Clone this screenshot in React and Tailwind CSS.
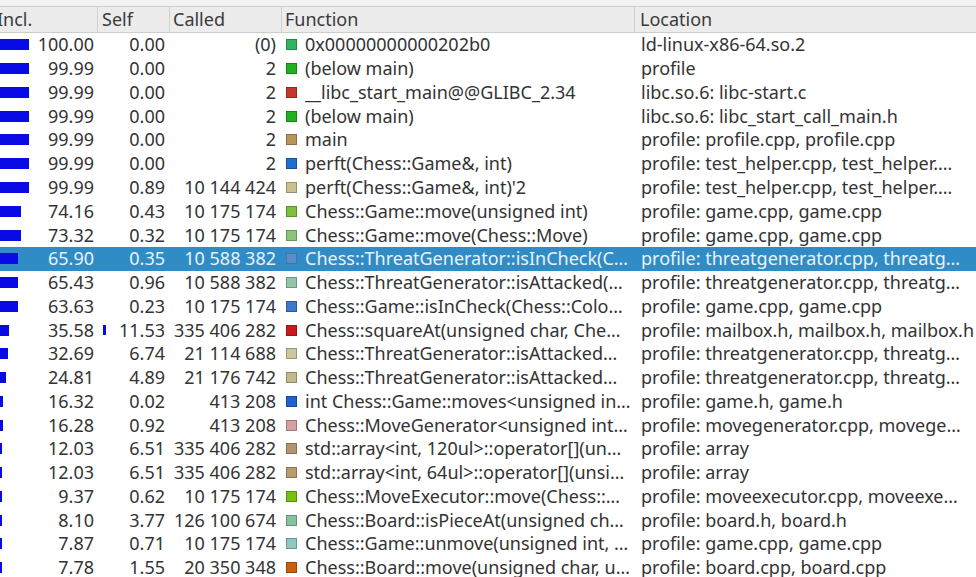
import React from "react";

/* ===== Data ===== */
const rows = [
  ["100.00", "0.00", "(0)", "#33b260", "0x00000000000202b0", "ld-linux-x86-64.so.2"],
  ["99.99", "0.00", "2", "#22b022", "(below main)", "profile"],
  ["99.99", "0.00", "2", "#c0392b", "__libc_start_main@@GLIBC_2.34", "libc.so.6: libc-start.c"],
  ["99.99", "0.00", "2", "#22b022", "(below main)", "libc.so.6: libc_start_call_main.h"],
  ["99.99", "0.00", "2", "#b8955a", "main", "profile: profile.cpp, profile.cpp"],
  ["99.99", "0.00", "2", "#1f6fd0", "perft(Chess::Game&, int)", "profile: test_helper.cpp, test_helper.…"],
  ["99.99", "0.89", "10 144 424", "#c9c28f", "perft(Chess::Game&, int)'2", "profile: test_helper.cpp, test_helper.…"],
  ["74.16", "0.43", "10 175 174", "#7cc03c", "Chess::Game::move(unsigned int)", "profile: game.cpp, game.cpp"],
  ["73.32", "0.32", "10 175 174", "#8cc47a", "Chess::Game::move(Chess::Move)", "profile: game.cpp, game.cpp"],
  ["65.90", "0.35", "10 588 382", "#6f8ccc", "Chess::ThreatGenerator::isInCheck(C…", "profile: threatgenerator.cpp, threatg…", true],
  ["65.43", "0.96", "10 588 382", "#92c6a8", "Chess::ThreatGenerator::isAttacked(…", "profile: threatgenerator.cpp, threatg…"],
  ["63.63", "0.23", "10 175 174", "#3a7ac8", "Chess::Game::isInCheck(Chess::Colo…", "profile: game.cpp, game.cpp"],
  ["35.58", "11.53", "335 406 282", "#c81c1c", "Chess::squareAt(unsigned char, Che…", "profile: mailbox.h, mailbox.h, mailbox.h"],
  ["32.69", "6.74", "21 114 688", "#cbc8a0", "Chess::ThreatGenerator::isAttacked…", "profile: threatgenerator.cpp, threatg…"],
  ["24.81", "4.89", "21 176 742", "#c2b98e", "Chess::ThreatGenerator::isAttacked…", "profile: threatgenerator.cpp, threatg…"],
  ["16.32", "0.02", "413 208", "#2060d0", "int Chess::Game::moves<unsigned in…", "profile: game.h, game.h"],
  ["16.28", "0.92", "413 208", "#d2a2a2", "Chess::MoveGenerator<unsigned int…", "profile: movegenerator.cpp, movege…"],
  ["12.03", "6.51", "335 406 282", "#b39572", "std::array<int, 120ul>::operator[](un…", "profile: array"],
  ["12.03", "6.51", "335 406 282", "#b89c6c", "std::array<int, 64ul>::operator[](unsi…", "profile: array"],
  ["9.37", "0.62", "10 175 174", "#78c010", "Chess::MoveExecutor::move(Chess::…", "profile: moveexecutor.cpp, moveexe…"],
  ["8.10", "3.77", "126 100 674", "#88c0a0", "Chess::Board::isPieceAt(unsigned ch…", "profile: board.h, board.h"],
  ["7.87", "0.71", "10 175 174", "#90c8c0", "Chess::Game::unmove(unsigned int, …", "profile: game.cpp, game.cpp"],
  ["7.78", "1.55", "20 350 348", "#c86010", "Chess::Board::move(unsigned char, u…", "profile: board.cpp, board.cpp"],
];

/* ===== Row ===== */
function Row({ incl, self, called, color, fn, loc, selected }) {
  const inclW = Math.max((31 * parseFloat(incl)) / 100 - 2, 2);
  const selfW = (29 * parseFloat(self)) / 100;

  return (
    <div
      className={`flex h-[23.77px] items-center whitespace-nowrap leading-[23px] ${
        selected ? "bg-[#308cc6] text-[#eaf2f9]" : ""
      }`}
    >
      {/* Incl. */}
      <div className="flex w-[98px] flex-none items-center pr-[4px]">
        <div className="h-[11px] flex-none bg-[#0a0ae6]" style={{ width: inclW }} />
        <span className="ml-auto">{incl}</span>
      </div>

      {/* Self */}
      <div className="flex w-[72px] flex-none items-center pl-[5px] pr-[5px]">
        {selfW >= 3 && <div className="h-[10px] flex-none bg-[#0a0ae6]" style={{ width: selfW }} />}
        <span className="ml-auto">{self}</span>
      </div>

      {/* Called */}
      <div className="w-[112px] flex-none pr-[6px] text-right">{called}</div>

      {/* Function */}
      <div className="flex w-[353px] flex-none items-center overflow-hidden pl-[4px]">
        <span
          className={`h-[11px] w-[11px] flex-none border border-black/25 ${selected ? "opacity-70" : ""}`}
          style={{ backgroundColor: color }}
        />
        <span className="ml-[8px] overflow-hidden">{fn}</span>
      </div>

      {/* Location */}
      <div className="flex-1 overflow-hidden pl-[6px]">{loc}</div>
    </div>
  );
}

/* ===== Table ===== */
export default function App() {
  return (
    <div className="h-[577px] w-[976px] overflow-hidden bg-white font-['Noto_Sans',sans-serif] text-[18px] text-[#333]">
      {/* top strip */}
      <div className="h-[6px] bg-[#f2f2f2]" />

      {/* header */}
      <div className="flex h-[27px] items-center border-y border-[#cdcdcd] bg-[#ececec] leading-[23px] text-[#3a3a3a]">
        <div className="flex h-full w-[98px] flex-none items-center border-r border-[#d0d0d0]">
          <span className="-ml-[3px]">Incl.</span>
        </div>
        <div className="flex h-full w-[72px] flex-none items-center border-r border-[#d0d0d0] pl-[4px]">Self</div>
        <div className="flex h-full w-[112px] flex-none items-center border-r border-[#d0d0d0] pl-[3px]">Called</div>
        <div className="flex h-full w-[353px] flex-none items-center border-r border-[#d0d0d0] pl-[3px]">Function</div>
        <div className="flex h-full flex-1 items-center pl-[5px]">Location</div>
      </div>

      {/* body */}
      <div>
        {rows.map((r, i) => (
          <Row
            key={i}
            incl={r[0]}
            self={r[1]}
            called={r[2]}
            color={r[3]}
            fn={r[4]}
            loc={r[5]}
            selected={r[6]}
          />
        ))}
      </div>
    </div>
  );
}
